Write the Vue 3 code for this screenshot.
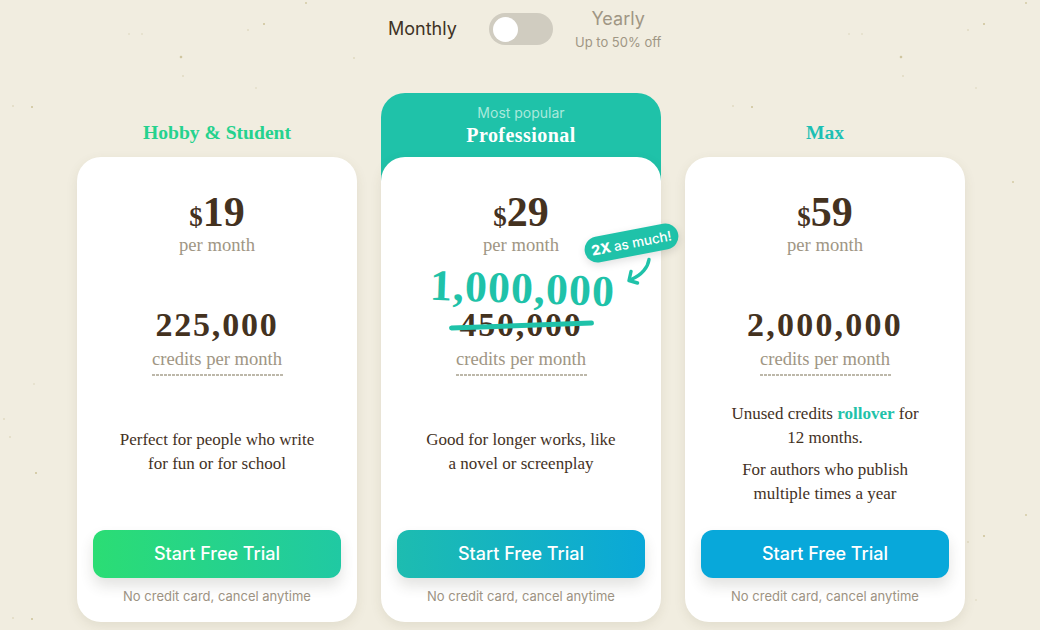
<script setup>
const plans = [
  { id: 'hobby', name: 'Hobby & Student', price: 19, credits: '225,000', desc: [['Perfect for people who write', 'for fun or for school']], btn: 'g1' },
  { id: 'pro', name: 'Professional', price: 29, credits: '450,000', boosted: '1,000,000', desc: [['Good for longer works, like', 'a novel or screenplay']], btn: 'g2' },
  { id: 'max', name: 'Max', price: 59, credits: '2,000,000', desc: [['For authors who publish', 'multiple times a year']], rollover: true, btn: 'g3' }
]
</script>

<template>
  <div class="page">
    <div class="toggle-row">
      <span class="monthly">Monthly</span>
      <span class="switch"><span class="knob"></span></span>
      <div class="yearly">
        <div class="yearly-main">Yearly</div>
        <div class="yearly-sub">Up to 50% off</div>
      </div>
    </div>

    <div class="plans">
      <div v-for="p in plans" :key="p.id" class="col">
        <div v-if="p.id === 'pro'" class="popular">
          <div class="popular-sub">Most popular</div>
          <div class="popular-name">{{ p.name }}</div>
        </div>
        <div v-else class="plan-name" :class="p.id">{{ p.name }}</div>

        <div class="card" :class="'card-' + p.id">
          <div class="price"><span class="cur">$</span>{{ p.price }}</div>
          <div class="per">per month</div>

          <div class="credits-block">
            <div v-if="p.boosted" class="boosted">{{ p.boosted }}</div>
            <div class="credits">
              {{ p.credits }}
              <span v-if="p.boosted" class="strike"></span>
            </div>
            <div class="credits-label"><span>credits per month</span></div>
          </div>

          <div v-if="p.boosted" class="badge">2X <span class="badge-rest">as much!</span></div>
          <svg v-if="p.boosted" class="arrow" viewBox="0 0 26 28" fill="none" stroke="#1fc2a9" stroke-width="3.4" stroke-linecap="round" stroke-linejoin="round">
            <path d="M23 2.5C22 10 16 18 5 22.5" />
            <path d="M5 14.5L3 23.5L11.5 26" />
          </svg>

          <div class="desc" :class="{ 'desc-long': p.rollover }">
            <p v-if="p.rollover">Unused credits <b>rollover</b> for<br>12 months.</p>
            <p v-for="(d, i) in p.desc" :key="i">{{ d[0] }}<br>{{ d[1] }}</p>
          </div>

          <button class="cta" :class="p.btn">Start Free Trial</button>
          <div class="note">No credit card, cancel anytime</div>
        </div>
      </div>
    </div>
  </div>
</template>

<style>
html, body { margin: 0; background: #f1ede0; }
</style>

<style scoped>
.page {
  width: 1040px;
  height: 630px;
  overflow: hidden;
  box-sizing: border-box;
  background-color: #f1ede0;
  background-size: 720px 512px;
  background-image:
    radial-gradient(circle at 181px 57px, #d0c6a0 1px, transparent 1.7px),
    radial-gradient(circle at 32px 107px, #d6cdaa 0.8px, transparent 1.4px),
    radial-gradient(circle at 264px 24px, #d6cdaa 0.8px, transparent 1.4px),
    radial-gradient(circle at 36px 473px, #d6cdaa 0.8px, transparent 1.4px),
    radial-gradient(circle at 293px 182px, #dbd3b3 0.8px, transparent 1.4px),
    radial-gradient(circle at 306px 3px, #dbd3b3 0.8px, transparent 1.4px),
    radial-gradient(circle at 354px 58px, #e4dec8 0.8px, transparent 1.4px),
    radial-gradient(circle at 129px 34px, #e7e2cf 0.8px, transparent 1.4px),
    radial-gradient(circle at 142px 34px, #e7e2cf 0.8px, transparent 1.4px),
    radial-gradient(circle at 248px 30px, #e5dfca 0.8px, transparent 1.4px),
    radial-gradient(circle at 183px 76px, #e5dfca 0.8px, transparent 1.4px),
    radial-gradient(circle at 256px 88px, #e7e2cf 0.8px, transparent 1.4px),
    radial-gradient(circle at 13px 106px, #e5dfca 0.8px, transparent 1.4px),
    radial-gradient(circle at 10px 437px, #e5dfca 0.8px, transparent 1.4px),
    radial-gradient(circle at 4px 419px, #e5dfca 0.8px, transparent 1.4px),
    radial-gradient(circle at 34px 384px, #e7e2cf 0.8px, transparent 1.4px);
  font-family: "Liberation Serif", serif;
  color: #44321f;
}
.toggle-row {
  height: 93px;
  box-sizing: border-box;
  padding: 8px 0 0 388px;
  display: flex;
  align-items: flex-start;
}
.monthly {
  font: 400 18px/42px Inter, sans-serif;
  color: #3f3325;
  width: 101px;
}
.switch {
  margin-top: 5px;
  width: 64px;
  height: 32px;
  border-radius: 16px;
  background: #d0ccc0;
  display: flex;
  align-items: center;
  padding-left: 4px;
  box-sizing: border-box;
}
.knob { width: 25px; height: 25px; border-radius: 50%; background: #fff; }
.yearly { margin-left: 22px; text-align: center; font-family: Inter, sans-serif; color: #a09684; }
.yearly-main { font-size: 18px; line-height: 22px; }
.yearly-sub { font-size: 13px; line-height: 24px; }

.plans {
  display: grid;
  grid-template-columns: repeat(3, 280px);
  gap: 24px;
  padding-left: 77px;
}
.col { height: 529px; display: flex; flex-direction: column; justify-content: flex-end; position: relative; }
.plan-name {
  font-weight: 700;
  font-size: 19.6px;
  line-height: 24px;
  text-align: center;
  margin-bottom: 12px;
}
.plan-name.hobby { color: #25d28e; }
.plan-name.max { color: #1cc0b4; }
.popular {
  position: absolute;
  top: 0;
  left: 0;
  right: 0;
  height: 100px;
  border-radius: 24px 24px 0 0;
  background: #1fc2a9;
  text-align: center;
  padding-top: 11px;
  box-sizing: border-box;
}
.popular-sub { font: 400 14px/18px Inter, sans-serif; color: #a9e9dc; }
.popular-name { font-weight: 700; font-size: 20px; line-height: 27px; letter-spacing: 0.45px; color: #fff; }

.card {
  position: relative;
  height: 465px;
  box-sizing: border-box;
  background: #fff;
  border-radius: 24px;
  padding: 38px 16px 17px;
  display: flex;
  flex-direction: column;
  align-items: stretch;
  text-align: center;
  box-shadow: 0 4px 12px rgba(90, 75, 40, 0.1);
}
.price { font-weight: 700; font-size: 42px; line-height: 34px; color: #44321f; }
.cur { font-size: 27px; }
.per { font-size: 18.6px; line-height: 22px; color: #a09684; }
.credits-block { position: relative; margin-top: 51px; }
.credits { font-weight: 700; font-size: 34px; line-height: 36px; letter-spacing: 1.8px; color: #44321f; position: relative; width: fit-content; margin: 0 auto; }
.card-max .credits { letter-spacing: 2.2px; }
.boosted {
  position: absolute;
  left: 0;
  right: 0;
  top: -39px;
  font-weight: 700;
  font-size: 44px;
  line-height: 42px;
  letter-spacing: 1px;
  color: #1fc2a9;
  transform: translateX(1.5px) rotate(2deg);
}
.strike {
  position: absolute;
  left: -10px;
  right: -12px;
  top: 16px;
  height: 5px;
  border-radius: 3px;
  background: #1fc2a9;
  transform: rotate(-2deg);
}
.credits-label { margin-top: 5px; line-height: 22px; font-size: 18.6px; color: #a09684; }
.credits-label span {
  display: inline-block;
  padding-bottom: 6px;
  width: 131px;
  white-space: nowrap;
  background: repeating-linear-gradient(90deg, #bdb8aa 0 3px, transparent 3px 4px) left bottom / 100% 2px no-repeat;
}
.badge {
  position: absolute;
  left: 203px;
  top: 73px;
  height: 26px;
  width: 95px;
  border-radius: 13px;
  background: #1fc2a9;
  color: #fff;
  font: 800 14px/26px Inter, sans-serif;
  white-space: nowrap;
  transform: rotate(-11deg);
  box-shadow: 0 3px 8px rgba(0, 0, 0, 0.12);
}
.badge-rest { font-weight: 500; font-size: 13.5px; }
.arrow { position: absolute; left: 245px; top: 100px; width: 26px; height: 28px; }
.desc {
  flex: 1;
  display: flex;
  flex-direction: column;
  justify-content: center;
  padding-bottom: 2px;
  font-size: 17px;
  line-height: 24px;
  color: #44321f;
}
.desc-long { padding-top: 2px; padding-bottom: 0; }
.desc p { margin: 0; }
.desc p + p { margin-top: 8px; }
.desc b { color: #1fc2a9; }
.cta {
  height: 48px;
  border: 0;
  border-radius: 12px;
  color: #fff;
  font: 500 18px Inter, sans-serif;
  padding-bottom: 2px;
  box-shadow: 0 8px 14px rgba(60, 60, 40, 0.14);
  flex: none;
}
.g1 { background: linear-gradient(90deg, #2bdd74, #20c9a3); }
.g2 { background: linear-gradient(90deg, #1dbcb0, #0aa8d8); }
.g3 { background: #08a8da; }
.note {
  margin-top: 9px;
  font: 400 13px/18px Inter, sans-serif;
  color: #9c9282;
}
</style>
